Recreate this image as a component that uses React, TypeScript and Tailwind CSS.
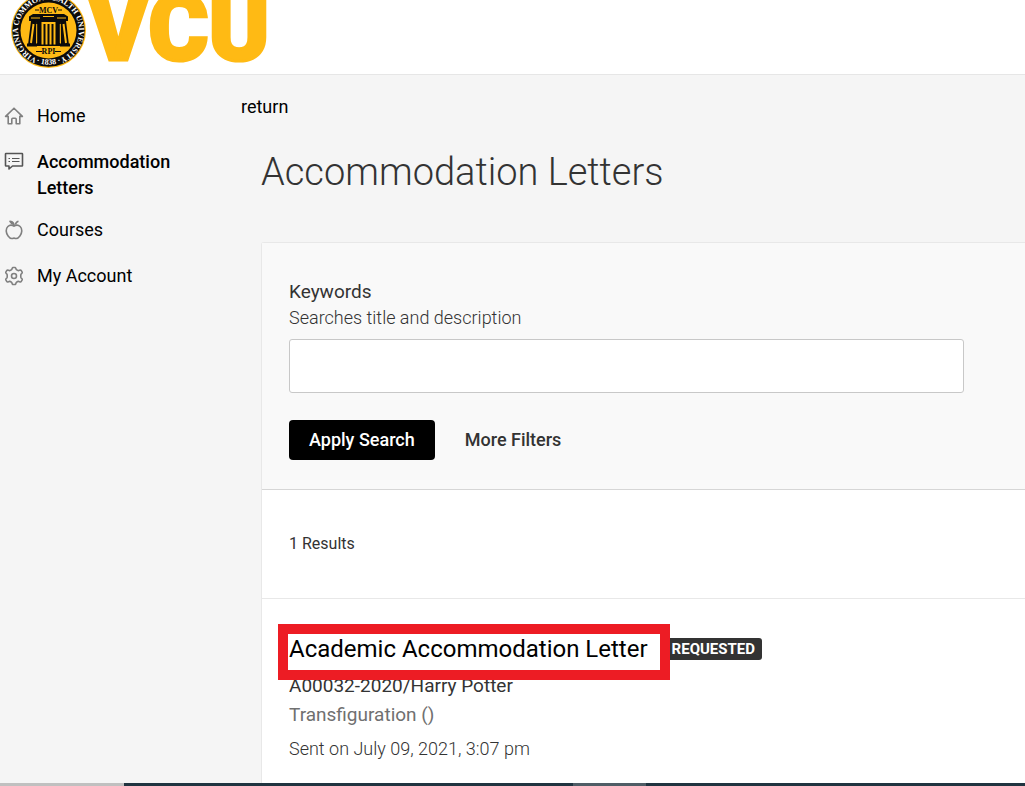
import type { ReactNode } from 'react'

interface NavItem {
  label: string
  icon: ReactNode
  active?: boolean
}

const iconProps = {
  className: 'mt-[3px] h-5 w-5 shrink-0',
  viewBox: '0 0 20 20',
  fill: 'none',
  stroke: 'currentColor',
  strokeWidth: 1.6,
  strokeLinejoin: 'round' as const,
  'aria-hidden': true,
}

const navItems: NavItem[] = [
  {
    label: 'Home',
    icon: (
      <svg {...iconProps}>
        <path d="M1.600 10.400 10 2.200l8.400 8.200h-2.600v7.400h-3.600v-4.600a1 1 0 0 0-1-1H8.800a1 1 0 0 0-1 1v4.600H4.200v-7.400z" />
      </svg>
    ),
  },
  {
    label: 'Accommodation Letters',
    active: true,
    icon: (
      <svg {...iconProps}>
        <path d="M2 1.500h16a.5.5 0 0 1 .5.5v11.500a.5.5 0 0 1-.5.5H8.500L5 17v-3H2a.5.5 0 0 1-.5-.5V2a.5.5 0 0 1 .5-.5z" />
        <path d="M4.500 6.500H6M8 6.500h7.500M4.500 9.500H6M8 9.500h7.500" strokeWidth="1.200" />
      </svg>
    ),
  },
  {
    label: 'Courses',
    icon: (
      <svg {...iconProps}>
        <path d="M10 6.200C8.200 5 5.600 4.900 3.900 6.500c-2.500 2.400-2 6.700.2 9.500 1.400 1.900 2.900 2.900 4.400 2.400 1-.4 2-.4 3 0 1.500.5 3-.5 4.400-2.400 2.200-2.800 2.700-7.100.2-9.500C14.400 4.900 11.800 5 10 6.200z" />
        <path d="M10 6.200c.2-2.800-1.200-4.500-4-4.800.8 1.600 2 2.600 3.800 3M11.500 4.600c.2-1.800 1.200-3 3-3.400" />
      </svg>
    ),
  },
  {
    label: 'My Account',
    icon: (
      <svg {...iconProps}>
        <circle cx="10" cy="10" r="2.500" />
        <path d="M8.700 1.500h2.600c.5 0 .6 1.800 1.100 2.200.6.500 1.500 1 2.200.9.700-.1 2-.9 2.400-.4l1.300 2.200c.3.600-1.200 1.500-1.400 2.100-.2.900-.2 2.100 0 3 .2.600 1.700 1.500 1.400 2.100L17 15.800c-.4.500-1.700-.3-2.400-.4-.7-.1-1.600.4-2.200.9-.5.400-.6 2.200-1.100 2.200H8.700c-.5 0-.6-1.800-1.100-2.200-.6-.5-1.500-1-2.200-.9-.7.100-2 .9-2.400.4l-1.300-2.200c-.3-.6 1.200-1.500 1.400-2.100.2-.9.200-2.100 0-3-.2-.6-1.700-1.500-1.400-2.100L3 4.200c.4-.5 1.700.3 2.400.4.700.1 1.600-.4 2.200-.9.500-.4.600-2.200 1.100-2.200z" />
      </svg>
    ),
  },
]

function Logo() {
  return (
    <svg className="block" width="280" height="74" viewBox="0 0 280 74" role="img" aria-label="VCU">
      <defs>
        <path id="seal-ring" d="M35 57.700A30.400 30.400 0 1 1 62 57.700" />
        <path id="seal-foot" d="M30 59.300A34.200 34.200 0 0 0 67 59.300" />
      </defs>
      <circle cx="48.500" cy="30.500" r="37.500" fill="#ffba14" />
      <circle cx="48.500" cy="30.500" r="36.300" fill="#0b0b0b" />
      <circle cx="48.500" cy="30.500" r="28" fill="#ffba14" />
      <g fill="#fff" fontFamily="Liberation Serif, serif" fontWeight="700">
        <text fontSize="8" textAnchor="middle">
          <textPath href="#seal-ring" startOffset="50%">
            VIRGINIA COMMONWEALTH UNIVERSITY
          </textPath>
        </text>
        <text fontSize="8" textAnchor="middle">
          <textPath href="#seal-foot" startOffset="50%">
            · 1838 ·
          </textPath>
        </text>
      </g>
      <g fill="#0b0b0b">
        <path d="M33 14h31l4 2.500V21H29v-4.500zM27 43.500h10v3H27zM60 43.500h10v3H60z" />
        <path d="M31 21h6l-1 24h-8zM60 21h6l3 24h-8zM37 20h23v26H37z" />
      </g>
      <g stroke="#ffba14" fill="none">
        <path d="M31 18h9M57 18h9" strokeWidth="1" />
        <path d="M43 16.500h11" strokeWidth="1" />
        <path d="M33.500 24 31 43M63.500 24 66 43" strokeWidth="2" />
        <path d="M36.700 24v19M60.300 24v19" strokeWidth="1" />
        <path d="M42.500 24v20.500M46.500 23v21.500M50.500 23v21.500M54.500 24v20.500" strokeWidth="2" />
        <path d="M41.500 23h14" strokeWidth="2" />
      </g>
      <g fill="#0b0b0b" fontFamily="Liberation Serif, serif" fontSize="8" fontWeight="700" textAnchor="middle">
        <text x="48.500" y="12.500">
          MCV
        </text>
        <text x="48.500" y="54">
          RPI
        </text>
      </g>
      <path d="M35 10h4M58 10h4M36 51.500h6M55 51.500h6" stroke="#0b0b0b" />
      <text
        x="88"
        y="60"
        fill="#ffba14"
        stroke="#ffba14"
        strokeWidth="3"
        fontFamily="Roboto, sans-serif"
        fontWeight="900"
        fontSize="92"
      >
        VCU
      </text>
    </svg>
  )
}

function Sidebar() {
  return (
    <nav className="w-[241px] shrink-0 pt-7 pl-1" aria-label="Main">
      <ul>
        {navItems.map((item) => (
          <li key={item.label} className={item.active ? 'mb-4' : 'mb-5'}>
            <a
              href="#"
              className={`flex w-44 gap-[13px] text-[18px] leading-[26px] text-black ${item.active ? 'font-medium' : ''}`}
            >
              <span className={item.active ? 'text-[#555]' : 'text-[#808080]'}>{item.icon}</span>
              {item.label}
            </a>
          </li>
        ))}
      </ul>
    </nav>
  )
}

function SearchForm() {
  return (
    <form
      className="border-b border-[#d6d6d6] bg-[#f9f9f9] pt-9 pr-[61px] pb-[29px] pl-[27px]"
      onSubmit={(e) => e.preventDefault()}
    >
      <label htmlFor="keywords" className="block text-[19px] leading-[26px]">
        Keywords
      </label>
      <p id="keywords-hint" className="text-[18px] leading-[26px] font-light">
        Searches title and description
      </p>
      <input
        id="keywords"
        type="text"
        aria-describedby="keywords-hint"
        className="mt-2 block h-[54px] w-full rounded-[3px] border border-[#c8c8c8] bg-white px-3 text-[18px]"
      />
      <div className="mt-[27px] flex items-center">
        <button type="submit" className="h-10 rounded bg-black px-5 text-[18px] leading-[26px] font-medium text-white">
          Apply Search
        </button>
        <button type="button" className="ml-[30px] h-10 text-[18px] leading-[26px] font-medium">
          More Filters
        </button>
      </div>
    </form>
  )
}

function LetterResult() {
  return (
    <article className="px-[27px] pt-[33px]">
      <div className="flex items-center">
        <h2 className="relative text-[24px] leading-[34px]">
          <a href="#" className="text-black">
            Academic Accommodation Letter
          </a>
          {/* Highlight frame around the letter title */}
          <span className="pointer-events-none absolute -top-2 -right-[22px] -bottom-[14px] -left-[11px] z-10 border-[10px] border-[#ed1c24]" />
        </h2>
        <span className="ml-[17px] rounded-[3px] bg-[#333] px-[7px] text-[15px] leading-[22px] font-bold text-white">
          REQUESTED
        </span>
      </div>
      <p className="mt-[7px] text-[19px] leading-[26px]">A00032-2020/Harry Potter</p>
      <p className="mt-[3px] text-[19px] leading-[26px] text-[#707070]">Transfiguration ()</p>
      <p className="mt-2 text-[18px] leading-[26px] font-light">Sent on July 09, 2021, 3:07 pm</p>
    </article>
  )
}

export default function App() {
  return (
    <div className="flex min-h-screen flex-col bg-[#f5f5f5] font-[Roboto,sans-serif] text-[#333]">
      <header className="border-b border-[#e6e6e6] bg-white">
        <Logo />
      </header>
      <div className="flex grow">
        <Sidebar />
        <main className="flex grow flex-col">
          <a href="#" className="mt-[19px] self-start text-[18px] leading-[26px] text-black">
            return
          </a>
          <h1 className="mt-7 ml-5 text-[38px] leading-[48px] font-light">Accommodation Letters</h1>
          <section className="mt-[46px] ml-5 grow rounded-tl-[3px] border-t border-l border-[#e8e8e8] bg-white">
            <SearchForm />
            <p className="border-b border-[#e8e8e8] px-[27px] py-[41px] text-[16px] leading-[26px]">1 Results</p>
            <LetterResult />
          </section>
        </main>
      </div>
      <footer className="flex h-[3px] bg-[#203440]">
        <div className="w-[124px] bg-[#c0c0c0]" />
        <div className="ml-[449px] w-[73px] bg-[#4f5d66]" />
      </footer>
    </div>
  )
}
